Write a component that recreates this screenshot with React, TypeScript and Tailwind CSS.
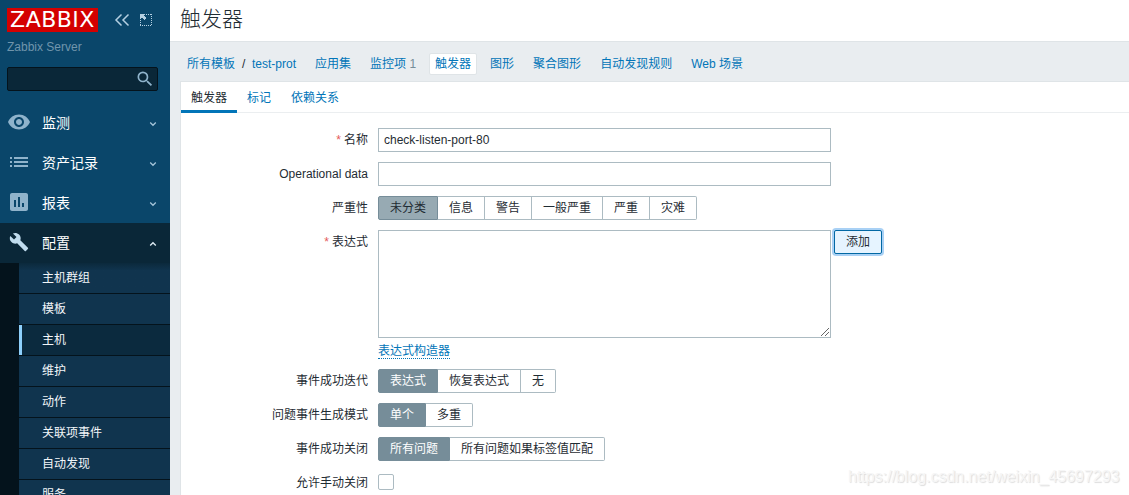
import type { ReactNode } from 'react';
import {
  MdAssessment,
  MdBuild,
  MdRemoveRedEye,
  MdSearch,
} from 'react-icons/md';
import clsx from 'clsx';

const subItems = [
  '主机群组',
  '模板',
  '主机',
  '维护',
  '动作',
  '关联项事件',
  '自动发现',
  '服务',
];

export default function App() {
  return (
    <div className="relative flex h-[495px] w-[1129px] overflow-hidden bg-[#e9edf0] font-['Liberation_Sans','Noto_Sans_CJK_SC',sans-serif] text-xs text-[#1f2c33]">
      <Sidebar />
      <main className="flex min-w-0 flex-1 flex-col">
        <header className="flex h-[42px] shrink-0 items-center border-b border-[#dfe4e7] bg-white pb-1 pl-2.5">
          <h1 className="text-[21px] leading-none font-light">触发器</h1>
        </header>
        <ObjectNav />
        <section className="ml-2.5 flex-1 border-t border-l border-[#dfe4e7] bg-white">
          <Tabs />
          <TriggerForm />
        </section>
      </main>
      <div className="absolute top-[467px] left-[848px] text-base leading-5 tracking-[-0.02px] whitespace-nowrap text-[#f6f6f6] [text-shadow:1px_1px_1px_#dcdcdc]">
        https://blog.csdn.net/weixin_45697293
      </div>
    </div>
  );
}

function Sidebar() {
  return (
    <aside className="flex w-[170px] shrink-0 flex-col overflow-hidden bg-[#0a466a] text-white">
      <div className="h-[103px] shrink-0 px-[7px] pt-2">
        <div className="flex h-6 items-center">
          <div className="flex h-6 w-[91px] items-center justify-center bg-[#d40000] font-['DejaVu_Sans'] text-[22px] leading-none tracking-[0.5px]">
            ZABBIX
          </div>
          <svg
            className="ml-4 h-4 w-4"
            viewBox="0 0 16 16"
            fill="none"
            stroke="#b4d0e2"
            strokeWidth="1.5"
          >
            <path d="M7.500 2.500 2 8l5.500 5.500M14.500 2.500 9 8l5.500 5.500" />
          </svg>
          <svg
            className="ml-2.5 h-3 w-3"
            viewBox="0 0 12 12"
            fill="none"
            stroke="#b4d0e2"
            shapeRendering="crispEdges"
          >
            <path
              d="M6 .5H12M11.500 0V12M0 11.500H12M.5 6V12"
              strokeDasharray="1 1"
            />
            <path
              d="M0 0h5L3.500 1.500 6 4 4 6 1.500 3.500 0 5z"
              fill="#b4d0e2"
              stroke="none"
            />
          </svg>
        </div>
        <div className="mt-2 h-[27px] leading-[14px] text-[#7095ac]">
          Zabbix Server
        </div>
        <div className="flex h-6 w-[151px] items-center justify-end rounded-[2px] border border-[#04131c] bg-[#0a2738] pr-[2px]">
          <MdSearch size={20} color="#8fb3cb" />
        </div>
      </div>
      <MenuItem
        icon={<MdRemoveRedEye size={24} className="-ml-[3px]" />}
        label="监测"
      />
      <MenuItem icon={<ListIcon />} label="资产记录" />
      <MenuItem
        icon={<MdAssessment size={24} className="-ml-[3px]" />}
        label="报表"
      />
      <MenuItem
        icon={<MdBuild size={20} className="-ml-px" />}
        label="配置"
        open
      />
      <div className="flex-1 bg-[#04131c] pl-[19px]">
        <ul>
          {subItems.map((item, i) => (
            <li
              key={item}
              className={clsx(
                'flex h-[31px] items-center border-b border-[#04131c] text-[#f2f6f9]',
                item !== '主机' && 'bg-[#10344e] pl-[23px]',
                i === 0 && 'bg-linear-to-b from-[#0b293c] to-[#10344e] to-25%',
              )}
            >
              {item === '主机' ? (
                <span className="flex h-full w-full items-center border-l-3 border-[#8ed0fb] bg-[#0b2a3e] pl-5">
                  {item}
                </span>
              ) : (
                item
              )}
            </li>
          ))}
        </ul>
      </div>
    </aside>
  );
}

function ListIcon() {
  return (
    <svg
      className="h-2.5 w-[18px]"
      viewBox="0 0 18 10"
      fill="none"
      stroke="currentColor"
      strokeWidth="2"
    >
      <path d="M0 1h2M4 1h14M0 5h2M4 5h14M0 9h2M4 9h14" />
    </svg>
  );
}

function MenuItem({
  icon,
  label,
  open,
}: {
  icon: ReactNode;
  label: string;
  open?: boolean;
}) {
  return (
    <div
      className={clsx(
        'flex h-10 shrink-0 items-center pr-[13px] pl-2.5 text-sm',
        open ? 'bg-[#0a2738]' : 'bg-[#0a466a]',
      )}
    >
      <span
        className={clsx(
          'flex w-8 shrink-0 items-center pb-0.5',
          open ? 'text-[#c0dcee]' : 'text-[#8fb3cb]',
        )}
      >
        {icon}
      </span>
      <span className="flex-1">{label}</span>
      <svg
        className={clsx('mt-0.5 h-2 w-2', open && 'rotate-180')}
        viewBox="0 0 8 8"
        fill="none"
        stroke={open ? '#e0edf5' : '#a5c5d9'}
        strokeWidth="1.3"
      >
        <path d="M1.200 2.500 4 5.300 6.800 2.500" />
      </svg>
    </div>
  );
}

function ObjectNav() {
  return (
    <nav className="flex h-[39px] shrink-0 items-center gap-[7px] pt-[5px] pl-[11px] whitespace-nowrap text-[#0275b8] [&>a]:border [&>a]:border-transparent [&>a]:px-[5px]">
      <a>所有模板</a>
      <span className="-mx-1.5 w-[3px] text-[#1f2c33]">/</span>
      <a>test-prot</a>
      <a>应用集</a>
      <a>
        监控项 <span className="text-[#768d99]">1</span>
      </a>
      <a className="h-[22px] rounded-[2px] border-[#dfe4e7]! bg-white leading-5">
        触发器
      </a>
      <a>图形</a>
      <a>聚合图形</a>
      <a>自动发现规则</a>
      <a>Web 场景</a>
    </nav>
  );
}

function Tabs() {
  return (
    <div className="flex h-[31px] border-b border-[#ebeef0] text-[#0275b8]">
      <span className="h-[31px] border-b-3 border-[#0275b8] px-2.5 leading-[32px] text-[#1f2c33]">
        触发器
      </span>
      <span className="px-2.5 leading-[32px]">标记</span>
      <span className="px-2.5 leading-[32px]">依赖关系</span>
    </div>
  );
}

function TriggerForm() {
  return (
    <div className="flex flex-col gap-2.5 pt-[15px]">
      <Row label="名称" required>
        <div className="h-6 w-[453px] border border-[#acbbc2] px-[5px] leading-[22px]">
          check-listen-port-80
        </div>
      </Row>
      <Row label="Operational data">
        <div className="h-6 w-[453px] border border-[#acbbc2]" />
      </Row>
      <Row label="严重性">
        <Segments
          options={['未分类', '信息', '警告', '一般严重', '严重', '灾难']}
          activeClass="bg-[#97aab3]"
        />
      </Row>
      <Row label="表达式" required>
        <div>
          <div className="flex">
            <div className="flex h-[108px] w-[453px] items-end justify-end border border-[#acbbc2] p-px">
              <svg
                className="h-2 w-2"
                viewBox="0 0 8 8"
                stroke="#555"
                strokeWidth="0.9"
              >
                <path d="M0 8 8 0M4 8l4-4" />
              </svg>
            </div>
            <button className="ml-[3px] h-6 w-12 rounded-[2px] border border-[#0268a4] bg-[#e6f4ff] pt-px leading-[21px] shadow-[0_0_0_2px_#a9d1f5]">
              添加
            </button>
          </div>
          <div className="flex h-[21px] pt-[5px]">
            <a className="h-4 border-b border-dotted border-[#0275b8] leading-[17px] text-[#0275b8]">
              表达式构造器
            </a>
          </div>
        </div>
      </Row>
      <Row label="事件成功迭代">
        <Segments options={['表达式', '恢复表达式', '无']} />
      </Row>
      <Row label="问题事件生成模式">
        <Segments options={['单个', '多重']} />
      </Row>
      <Row label="事件成功关闭">
        <Segments options={['所有问题', '所有问题如果标签值匹配']} />
      </Row>
      <Row label="允许手动关闭">
        <div className="mt-[3px] h-4 w-4 rounded-[2px] border border-[#acbbc2]" />
      </Row>
    </div>
  );
}

function Row({
  label,
  required,
  children,
}: {
  label: string;
  required?: boolean;
  children: ReactNode;
}) {
  return (
    <div className="flex items-start">
      <div className="mr-2.5 w-[187px] shrink-0 text-right leading-6">
        {required && <span className="mr-[3px] text-[#e45959]">*</span>}
        {label}
      </div>
      {children}
    </div>
  );
}

function Segments({
  options,
  activeClass = 'bg-[#768d99] text-white',
}: {
  options: string[];
  activeClass?: string;
}) {
  return (
    <div className="flex leading-[22px]">
      {options.map((option, i) => (
        <span
          key={option}
          className={clsx(
            'h-6 border-y border-r px-[11px] first:rounded-l-[2px] first:border-l last:rounded-r-[2px]',
            i === 0 ? `border-[#768d99] ${activeClass}` : 'border-[#acbbc2]',
          )}
        >
          {option}
        </span>
      ))}
    </div>
  );
}
